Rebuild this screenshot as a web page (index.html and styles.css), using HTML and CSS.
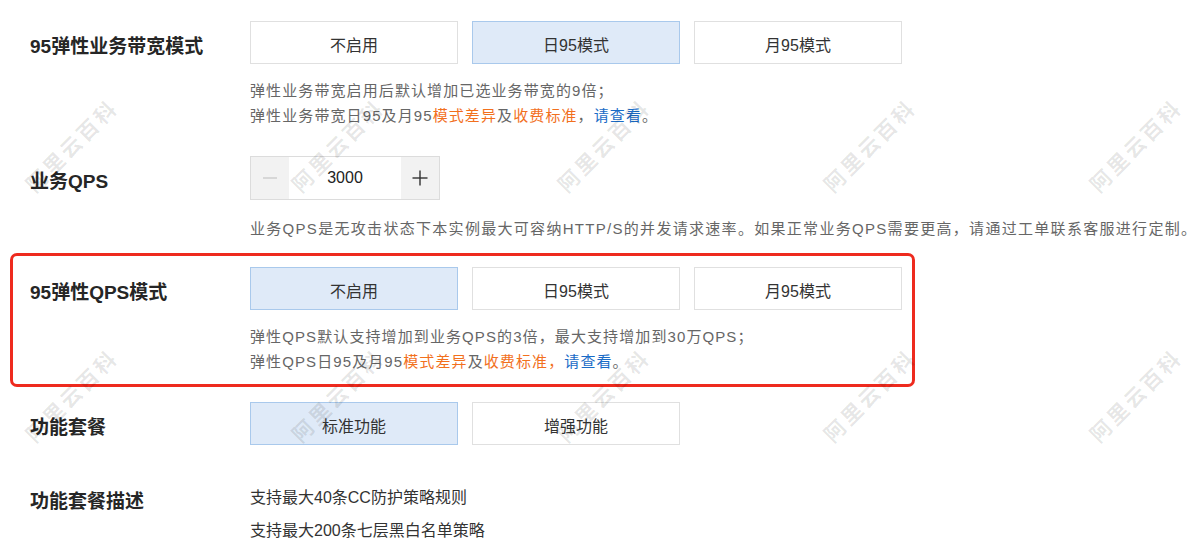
FILE: index.html
```html
<!DOCTYPE html>
<html lang="zh-CN">
<head>
<meta charset="utf-8">
<title>配置</title>
<link rel="stylesheet" href="styles.css">
</head>
<body>
<div class="page">
  <div class="row">
    <div class="label">95弹性业务带宽模式</div>
    <div class="field">
      <div class="options">
        <div class="opt">不启用</div>
        <div class="opt active">日95模式</div>
        <div class="opt">月95模式</div>
      </div>
      <div class="desc">
        <p>弹性业务带宽启用后默认增加已选业务带宽的9倍；</p>
        <p>弹性业务带宽日95及月95<span class="orange">模式差异</span>及<span class="orange">收费标准</span>，<span class="blue">请查看</span>。</p>
      </div>
    </div>
  </div>

  <div class="row row-qps">
    <div class="label label-qps">业务QPS</div>
    <div class="field">
      <div class="stepper">
        <div class="step-btn">
          <svg width="16" height="16" viewBox="0 0 16 16"><line x1="1" y1="8" x2="15" y2="8" stroke="#c8c8c8" stroke-width="1.3"/></svg>
        </div>
        <div class="step-val">3000</div>
        <div class="step-btn">
          <svg width="16" height="16" viewBox="0 0 16 16"><line x1="0.5" y1="8" x2="15.5" y2="8" stroke="#333" stroke-width="1.4"/><line x1="8" y1="0.5" x2="8" y2="15.5" stroke="#333" stroke-width="1.4"/></svg>
        </div>
      </div>
      <div class="desc desc-qps">
        <p>业务QPS是无攻击状态下本实例最大可容纳HTTP/S的并发请求速率。如果正常业务QPS需要更高，请通过工单联系客服进行定制。</p>
      </div>
    </div>
  </div>

  <div class="row row-highlight">
    <div class="label">95弹性QPS模式</div>
    <div class="field">
      <div class="options">
        <div class="opt active">不启用</div>
        <div class="opt">日95模式</div>
        <div class="opt">月95模式</div>
      </div>
      <div class="desc">
        <p>弹性QPS默认支持增加到业务QPS的3倍，最大支持增加到30万QPS；</p>
        <p>弹性QPS日95及月95<span class="orange">模式差异</span>及<span class="orange">收费标准，</span><span class="blue">请查看</span>。</p>
      </div>
    </div>
  </div>

  <div class="row row-pkg">
    <div class="label">功能套餐</div>
    <div class="field">
      <div class="options">
        <div class="opt active">标准功能</div>
        <div class="opt">增强功能</div>
      </div>
    </div>
  </div>

  <div class="row row-pkgdesc">
    <div class="label label-plain">功能套餐描述</div>
    <div class="field">
      <div class="plain">
        <p>支持最大40条CC防护策略规则</p>
        <p>支持最大200条七层黑白名单策略</p>
      </div>
    </div>
  </div>

  <div class="wm-layer" aria-hidden="true">
    <div class="wm"><span>阿里云百科</span></div>
    <div class="wm"><span>阿里云百科</span></div>
    <div class="wm"><span>阿里云百科</span></div>
    <div class="wm"><span>阿里云百科</span></div>
    <div class="wm"><span>阿里云百科</span></div>
    <div class="wm"><span>阿里云百科</span></div>
    <div class="wm"><span>阿里云百科</span></div>
    <div class="wm"><span>阿里云百科</span></div>
    <div class="wm"><span>阿里云百科</span></div>
    <div class="wm"><span>阿里云百科</span></div>
  </div>
</div>
</body>
</html>
```

FILE: styles.css
```css
* { box-sizing: border-box; }
html, body { margin: 0; padding: 0; background: #fff; }
body {
  font-family: "Liberation Sans", "Noto Sans CJK SC", sans-serif;
  color: #333;
}
p { margin: 0; }

.page {
  position: relative;
  width: 1200px;
  height: 555px;
  overflow: hidden;
  padding: 21px 0 0 30px;
}

.row {
  display: grid;
  grid-template-columns: 220px 1fr;
  align-items: start;
}

.label {
  height: 43px;
  display: flex;
  align-items: center;
  padding-top: 3px;
  font-size: 19px;
  font-weight: 700;
  color: #262626;
  white-space: nowrap;
}

.options {
  display: flex;
  gap: 14px;
}
.opt {
  width: 208px;
  height: 43px;
  display: flex;
  align-items: center;
  justify-content: center;
  border: 1px solid #e0e0e0;
  background: #fff;
  font-size: 16px;
  color: #333;
  padding-top: 2px;
}
.opt.active {
  background: #dfeaf8;
  border-color: #a9c9ec;
}

.desc {
  margin-top: 14px;
  font-size: 15px;
  line-height: 25px;
  letter-spacing: 1.1px;
  color: #666;
  white-space: nowrap;
}
.orange { color: #f2701d; }
.blue { color: #1a6cc7; }

.row-qps { margin-top: 28px; }
.label-qps { height: 44px; }
.stepper {
  display: flex;
  width: 190px;
  height: 44px;
  border: 1px solid #dcdcdc;
}
.step-btn {
  width: 38px;
  background: #f2f2f2;
  display: flex;
  align-items: center;
  justify-content: center;
}
.step-val {
  flex: 1;
  display: flex;
  align-items: center;
  justify-content: center;
  font-size: 16px;
  color: #222;
  background: #fff;
}
.desc-qps { margin-top: 16px; letter-spacing: 1.3px; }

.row-highlight {
  margin-top: 12px;
  margin-left: -20px;
  width: 905px;
  padding: 11px 0 10px 17px;
  border: 3px solid #ee2a1e;
  border-radius: 7px;
}

.row-pkg { margin-top: 15px; }

.row-pkgdesc { margin-top: 36px; }
.label-plain {
  height: 33px;
  padding-top: 3px;
}
.plain {
  font-size: 16px;
  line-height: 33px;
  color: #333;
}

.wm-layer {
  position: absolute;
  top: 20px;
  left: -62px;
  display: grid;
  grid-template-columns: repeat(5, 266px);
  grid-auto-rows: 250px;
  pointer-events: none;
}
.wm {
  display: flex;
  align-items: center;
  justify-content: center;
}
.wm span {
  display: block;
  transform: rotate(-45deg);
  font-family: "Noto Sans CJK SC", sans-serif;
  font-size: 21px;
  font-weight: 700;
  letter-spacing: 3px;
  color: rgba(0, 0, 0, 0.1);
  white-space: nowrap;
}
```
